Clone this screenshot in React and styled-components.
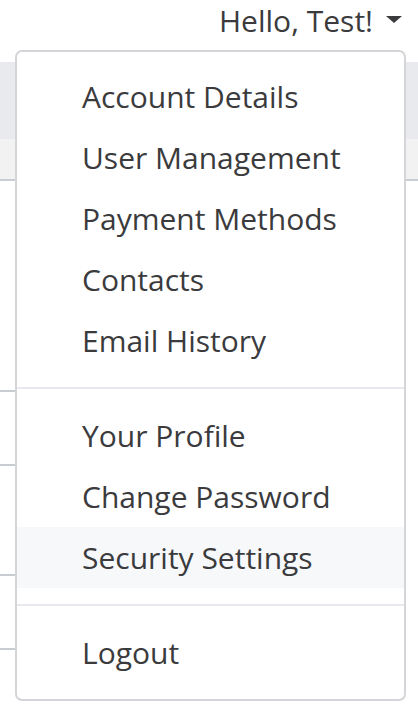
import React from 'react';
import styled, { createGlobalStyle } from 'styled-components';

const GlobalStyle = createGlobalStyle`
  html, body {
    margin: 0;
    padding: 0;
    background: #fff;
    font-family: "Open Sans", "Liberation Sans", sans-serif;
    color: #3b3b3d;
  }
`;

const Page = styled.div`
  position: relative;
  width: 418px;
  height: 724px;
  overflow: hidden;
`;

const Navbar = styled.header`
  height: 62px;
  display: flex;
  justify-content: flex-end;
  align-items: flex-start;
  padding: 0 16px 0;
  box-sizing: border-box;
`;

const UserToggle = styled.button`
  display: flex;
  align-items: center;
  border: 0;
  background: none;
  padding: 0;
  font: inherit;
  font-size: 30px;
  line-height: 42px;
  color: #3b3b3d;
  cursor: pointer;
`;

const Caret = styled.span`
  display: inline-block;
  margin-left: 13px;
  margin-top: -3px;
  border-top: 7px solid #3b3b3d;
  border-left: 8px solid transparent;
  border-right: 8px solid transparent;
`;

const SubHeader = styled.div`
  height: 77px;
  background: #e9eaee;
`;

const Toolbar = styled.div`
  height: 40px;
  background: #f2f2f2;
  border-bottom: 2px solid #c9ccd0;
`;

const TableRow = styled.div`
  height: ${(p) => p.$h}px;
  border-bottom: ${(p) => (p.$line ? '2px solid #c9ccd0' : 'none')};
  box-sizing: border-box;
  margin-right: 40px;
`;

const Menu = styled.div`
  position: absolute;
  top: 50px;
  left: 15px;
  width: 391px;
  box-sizing: border-box;
  background: #fff;
  border: 2px solid #d4d5d9;
  border-radius: 7px;
  padding: 14px 0 16px;
`;

const MenuItem = styled.a`
  display: block;
  height: 61px;
  line-height: 61px;
  padding-left: 65px;
  font-size: 30px;
  color: #3b3b3d;
  text-decoration: none;
  white-space: nowrap;
  background: ${(p) => (p.$active ? '#f7f8fa' : 'transparent')};
`;

const Divider = styled.hr`
  margin: 16px 0;
  border: 0;
  height: 2px;
  background: #e8e9ee;
`;

const groups = [
  ['Account Details', 'User Management', 'Payment Methods', 'Contacts', 'Email History'],
  ['Your Profile', 'Change Password', 'Security Settings'],
  ['Logout'],
];

const rows = [
  { h: 211, line: true },
  { h: 74, line: true },
  { h: 110, line: true },
  { h: 74, line: true },
];

export default function App() {
  return (
    <Page>
      <GlobalStyle />
      <Navbar>
        <UserToggle>
          Hello, Test!
          <Caret />
        </UserToggle>
      </Navbar>
      <SubHeader />
      <Toolbar />
      {rows.map((r, i) => (
        <TableRow key={i} $h={r.h} $line={r.line} />
      ))}
      <Menu>
        {groups.map((g, gi) => (
          <React.Fragment key={gi}>
            {gi > 0 && <Divider />}
            {g.map((label) => (
              <MenuItem key={label} href="#" $active={label === 'Security Settings'}>
                {label}
              </MenuItem>
            ))}
          </React.Fragment>
        ))}
      </Menu>
    </Page>
  );
}
